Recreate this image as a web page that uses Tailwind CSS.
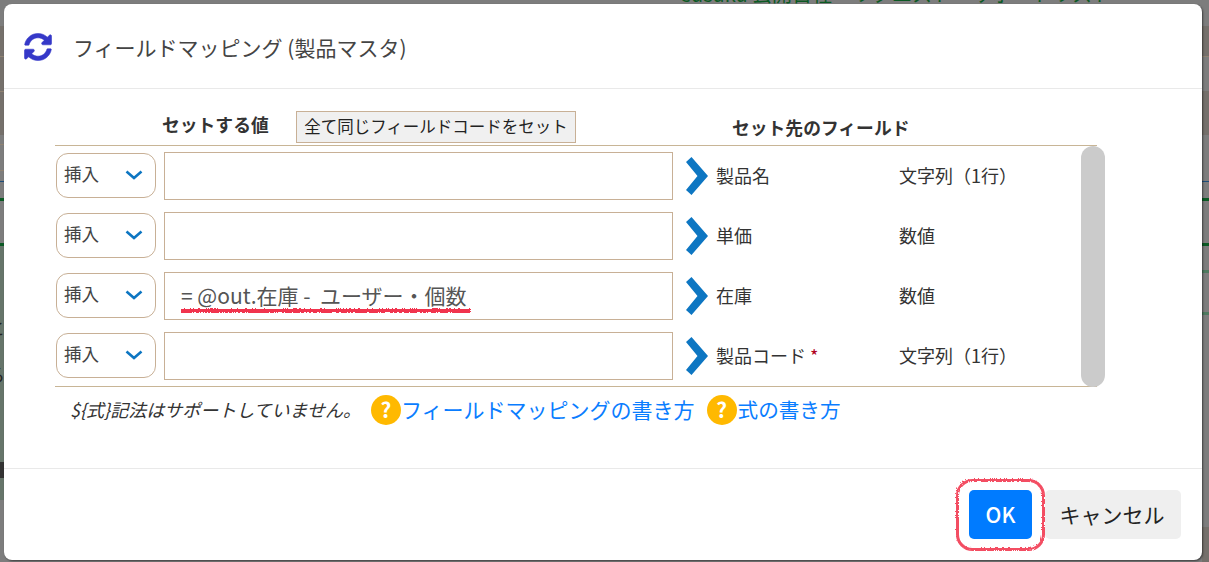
<!DOCTYPE html>
<html lang="ja">
<head>
<meta charset="UTF-8" />
<title>フィールドマッピング</title>
<script src="https://cdn.jsdelivr.net/npm/@tailwindcss/browser@4"></script>
</head>
<body class="relative w-[1209px] h-[562px] overflow-hidden bg-[#7d7d7d] font-['Noto_Sans_CJK_JP','Noto_Sans',sans-serif] text-[#333]">
  <!-- page behind the overlay -->
  <div class="absolute left-[680px] top-[-16px] text-[20px] leading-[20px] text-[#0b5a24] whitespace-nowrap">eusuku 公開日程　リクエスト　サポートリスト</div>
  <div class="absolute left-0 top-[26px] w-[4px] h-[109px] bg-[#75706b]"></div>
  <div class="absolute left-0 top-[56px] w-[4px] h-px bg-[#8f8272]"></div>
  <div class="absolute left-0 top-[91px] w-[4px] h-px bg-[#8f8272]"></div>
  <div class="absolute left-0 top-[144px] w-[4px] h-px bg-[#8f8272]"></div>
  <div class="absolute left-0 top-[170px] w-[4px] h-px bg-[#8f8272]"></div>
  <div class="absolute left-0 top-[181px] w-[4px] h-px bg-[#1d4d7a]"></div>
  <div class="absolute left-0 top-[198px] w-[4px] h-[3px] bg-[#0b5a24]"></div>
  <div class="absolute left-0 top-[243px] w-[4px] h-[3px] bg-[#0b5a24]"></div>
  <div class="absolute left-0 top-[246px] w-[4px] h-[254px] bg-[#66756a]"></div>
  <div class="absolute left-0 top-[462px] w-[4px] h-[16px] bg-[#333]"></div>
  <div class="absolute left-[-13px] top-[315px] text-[18px] leading-[24px] text-[#222]">と</div>
  <div class="absolute left-[-13px] top-[362px] text-[18px] leading-[24px] text-[#222]">る</div>
  <div class="absolute left-[1202px] top-[26px] w-[7px] h-[30px] bg-[#75706b]"></div>
  <div class="absolute left-[1202px] top-[56px] w-[7px] h-px bg-[#8f8272]"></div>
  <div class="absolute left-[1202px] top-[91px] w-[7px] h-[44px] bg-[#75706b]"></div>
  <div class="absolute left-[1202px] top-[181px] w-[7px] h-px bg-[#1d4d7a]"></div>
  <div class="absolute left-[1202px] top-[198px] w-[7px] h-[3px] bg-[#0b5a24]"></div>
  <div class="absolute left-[1202px] top-[243px] w-[7px] h-[3px] bg-[#0b5a24]"></div>
  <div class="absolute left-[1202px] top-[270px] w-[7px] h-[3px] bg-[#4f7a60]"></div>
  <div class="absolute left-[1202px] top-[312px] w-[7px] h-[3px] bg-[#4f7a60]"></div>
  <div class="absolute left-[1202px] top-[527px] w-[7px] h-[35px] bg-[#75706b]"></div>

  <!-- modal -->
  <div class="absolute left-[4px] top-[4px] w-[1198px] h-[556px] bg-white rounded-[8px] flex flex-col shadow-[1px_1px_2px_rgba(0,0,0,0.5)]">
    <div class="h-[85px] shrink-0 border-b border-[#e9e9e9] flex items-center pl-[20px] pt-[1px]">
      <svg class="w-[28px] h-[28px] mr-[21px] mt-[0px]" viewBox="0 0 512 512" fill="#3538c8" stroke="#3538c8" stroke-width="10"><path d="M370.7 133.3C339.5 104 298.9 88 256 88c-77.400 0-143.900 53.100-162.300 126.800-1.300 5.400-6.100 9.200-11.700 9.200H24.100c-7.500 0-13.200-6.800-11.800-14.200C34 94.100 134.900 8 256 8c66.400 0 126.700 26.100 171.300 68.700L463 41c15.100-15.100 41-4.400 41 17v134c0 13.300-10.700 24-24 24H346c-21.400 0-32.100-25.900-17-41l41.700-41.700zM32 296h134c21.400 0 32.100 25.900 17 41l-41.700 41.700c31.200 29.300 71.800 45.300 114.700 45.300 77.400 0 143.900-53.100 162.300-126.800 1.300-5.400 6.100-9.200 11.700-9.200h57.900c7.500 0 13.200 6.800 11.800 14.200C478 417.900 377.100 504 256 504c-66.400 0-126.700-26.100-171.300-68.700L49 471c-15.100 15.100-41 4.400-41-17V320c0-13.300 10.700-24 24-24z"/></svg>
      <h1 class="text-[21px] text-[#444] whitespace-nowrap mt-[3px]">フィールドマッピング (製品マスタ)</h1>
    </div>

    <div class="flex-1 pl-[51px] pt-[22px] relative">
      <div class="w-[1042px] h-[35px] flex items-center border-b border-[#c8b596]">
        <div class="ml-[107px] w-[134px] text-[17.8px] font-bold text-[#333] whitespace-nowrap mt-[-8px]">セットする値</div>
        <button class="w-[280px] h-[32px] mt-[-3px] bg-[#f0f0f0] border border-[#c8b096] text-[16.5px] text-[#222] whitespace-nowrap">全て同じフィールドコードをセット</button>
        <div class="ml-[156px] text-[17.8px] font-bold text-[#333] whitespace-nowrap mt-[-2px]">セット先のフィールド</div>
      </div>

      <div class="relative w-[1050px] h-[241px]">
        <div class="flex flex-col w-[1042px] h-[241px] border-b border-[#c8b596] pt-[6px]">
          <div class="h-[60px] shrink-0 flex items-start">
            <div class="ml-[1px] mt-[1px] w-[100px] h-[45px] border border-[#c8b096] rounded-[12px] flex items-center justify-between pl-[7px] pr-[12px] pb-[2px] text-[17.6px] text-[#444]">挿入
              <svg class="w-[18px] h-[10px]" viewBox="0 0 18 10" fill="none" stroke="#0d76c2" stroke-width="2.6"><path d="M1.500 1.500 9 8 16.500 1.500"/></svg>
            </div>
            <div class="ml-[8px] w-[509px] h-[48px] border border-[#c8b096]"></div>
            <svg class="ml-[13px] mt-[5px] w-[22px] h-[38px]" viewBox="0 0 22 38" fill="#0d76c2"><path d="M5.500 0 22 19 5.500 38 0 33 11.500 19 0 5z"/></svg>
            <div class="ml-[8px] w-[183px] mt-[10px] text-[18px] text-[#333]">製品名</div>
            <div class="mt-[10px] text-[18px] text-[#333] whitespace-nowrap">文字列（1行）</div>
          </div>
          <div class="h-[60px] shrink-0 flex items-start">
            <div class="ml-[1px] mt-[1px] w-[100px] h-[45px] border border-[#c8b096] rounded-[12px] flex items-center justify-between pl-[7px] pr-[12px] pb-[2px] text-[17.6px] text-[#444]">挿入
              <svg class="w-[18px] h-[10px]" viewBox="0 0 18 10" fill="none" stroke="#0d76c2" stroke-width="2.6"><path d="M1.500 1.500 9 8 16.500 1.500"/></svg>
            </div>
            <div class="ml-[8px] w-[509px] h-[48px] border border-[#c8b096]"></div>
            <svg class="ml-[13px] mt-[5px] w-[22px] h-[38px]" viewBox="0 0 22 38" fill="#0d76c2"><path d="M5.500 0 22 19 5.500 38 0 33 11.500 19 0 5z"/></svg>
            <div class="ml-[8px] w-[183px] mt-[10px] text-[18px] text-[#333]">単価</div>
            <div class="mt-[10px] text-[18px] text-[#333] whitespace-nowrap">数値</div>
          </div>
          <div class="h-[60px] shrink-0 flex items-start">
            <div class="ml-[1px] mt-[1px] w-[100px] h-[45px] border border-[#c8b096] rounded-[12px] flex items-center justify-between pl-[7px] pr-[12px] pb-[2px] text-[17.6px] text-[#444]">挿入
              <svg class="w-[18px] h-[10px]" viewBox="0 0 18 10" fill="none" stroke="#0d76c2" stroke-width="2.6"><path d="M1.500 1.500 9 8 16.500 1.500"/></svg>
            </div>
            <div class="relative ml-[8px] w-[509px] h-[48px] border border-[#c8b096] pl-[16px] text-[21px] leading-[44px] text-[#555] whitespace-pre">= @out.在庫 -  ユーザー・個数<svg class="absolute left-[14px] top-[33px] w-[292px] h-[8px]" viewBox="0 0 292 8"><defs><filter id="rough" x="-5%" y="-20%" width="110%" height="140%"><feTurbulence baseFrequency="0.5" numOctaves="2" seed="4"/><feDisplacementMap in="SourceGraphic" scale="2.500"/></filter></defs><rect x="1" y="2" width="290" height="4" fill="#f0203c" fill-opacity=".9" filter="url(#rough)"/></svg></div>
            <svg class="ml-[13px] mt-[5px] w-[22px] h-[38px]" viewBox="0 0 22 38" fill="#0d76c2"><path d="M5.500 0 22 19 5.500 38 0 33 11.500 19 0 5z"/></svg>
            <div class="ml-[8px] w-[183px] mt-[10px] text-[18px] text-[#333]">在庫</div>
            <div class="mt-[10px] text-[18px] text-[#333] whitespace-nowrap">数値</div>
          </div>
          <div class="h-[53px] shrink-0 flex items-start">
            <div class="ml-[1px] mt-[1px] w-[100px] h-[45px] border border-[#c8b096] rounded-[12px] flex items-center justify-between pl-[7px] pr-[12px] pb-[2px] text-[17.6px] text-[#444]">挿入
              <svg class="w-[18px] h-[10px]" viewBox="0 0 18 10" fill="none" stroke="#0d76c2" stroke-width="2.6"><path d="M1.500 1.500 9 8 16.500 1.500"/></svg>
            </div>
            <div class="ml-[8px] w-[509px] h-[48px] border border-[#c8b096]"></div>
            <svg class="ml-[13px] mt-[5px] w-[22px] h-[38px]" viewBox="0 0 22 38" fill="#0d76c2"><path d="M5.500 0 22 19 5.500 38 0 33 11.500 19 0 5z"/></svg>
            <div class="ml-[8px] w-[183px] mt-[10px] text-[18px] text-[#333]">製品コード <span class="text-[#b00020]">*</span></div>
            <div class="mt-[10px] text-[18px] text-[#333] whitespace-nowrap">文字列（1行）</div>
          </div>
        </div>
        <!-- scrollbar -->
        <div class="absolute left-[1026px] top-0 w-[24px] h-[241px] bg-[#cbcbcb] rounded-[12px]"></div>
      </div>

      <div class="flex items-center h-[45px] pl-[15px]">
        <i class="w-[301px] text-[18px] text-[#333] whitespace-nowrap">${式}記法はサポートしていません。</i>
        <span class="w-[30px] h-[30px] rounded-full bg-[#ffb900] text-white text-[21px] font-bold flex items-center justify-center">?</span>
        <a class="text-[21px] text-[#0a7dff] whitespace-nowrap">フィールドマッピングの書き方</a>
        <span class="ml-[12px] w-[30px] h-[30px] rounded-full bg-[#ffb900] text-white text-[21px] font-bold flex items-center justify-center">?</span>
        <a class="ml-[1px] text-[20.6px] text-[#0a7dff] whitespace-nowrap">式の書き方</a>
      </div>
    </div>

    <div class="h-[92px] shrink-0 border-t border-[#e9e9e9] flex justify-end items-start pt-[21px] pr-[21px] gap-[13px]">
      <button class="relative w-[63px] h-[49px] bg-[#007bff] text-white text-[21px] font-medium rounded-[5px]">OK
        <svg class="absolute left-[-15px] top-[-13px] w-[92px] h-[74px]" viewBox="0 0 92 74" fill="none"><rect x="2.500" y="2.500" width="86" height="69" rx="15" stroke="#f0203c" stroke-width="3" stroke-opacity=".8" filter="url(#rough)"/></svg>
      </button>
      <button class="w-[136px] h-[49px] pr-[2px] bg-[#efefef] text-[#222] text-[21px] rounded-[5px]">キャンセル</button>
    </div>
  </div>
</body>
</html>
